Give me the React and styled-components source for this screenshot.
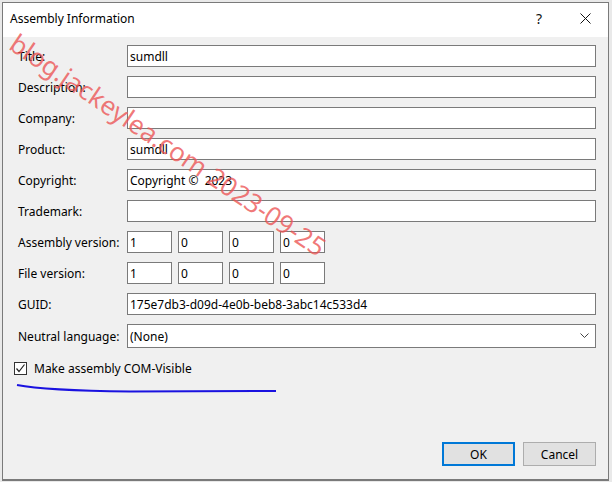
import React from 'react';
import styled, { createGlobalStyle } from 'styled-components';

const GlobalStyle = createGlobalStyle`
  html, body {
    margin: 0;
    padding: 0;
    background: #e9e9e9;
    font-family: "Noto Sans", "Liberation Sans", sans-serif;
  }
`;

// Styles
const Screen = styled.div`
  width: 612px;
  height: 482px;
  padding: 2px 0 0 2px;
  box-sizing: border-box;
  position: relative;
  overflow: hidden;
`;

const Dialog = styled.div`
  width: 607px;
  height: 479px;
  box-sizing: border-box;
  border: 1px solid #7a7a7a;
  border-bottom-width: 2px;
  background: #f0f0f0;
  display: flex;
  flex-direction: column;
`;

const TitleBar = styled.div`
  height: 34px;
  background: #ffffff;
  display: flex;
  align-items: center;
  padding: 0 0 0 7px;
  font-size: 12px;
  color: #000;
`;

const Caption = styled.div`
  flex: 1;
  padding-bottom: 4px;
`;

const TitleButton = styled.div`
  width: 46px;
  height: 34px;
  display: flex;
  align-items: center;
  justify-content: center;
  font-size: 14px;
  color: #111;
  padding-bottom: 3px;
  box-sizing: border-box;
`;

const Body = styled.div`
  flex: 1;
  display: flex;
  flex-direction: column;
  padding: 8px 12px 12px 15px;
`;

const Form = styled.div`
  display: grid;
  grid-template-columns: 109px 1fr;
  row-gap: 9px;
  align-items: center;
`;

const Label = styled.div`
  font-size: 12px;
  color: #000;
  white-space: nowrap;
`;

const Field = styled.div`
  height: ${(p) => (p.$tall ? 24 : 22)}px;
  width: ${(p) => (p.$w ? `${p.$w}px` : 'auto')};
  box-sizing: border-box;
  border: 1px solid #7a7a7a;
  background: #ffffff;
  display: flex;
  align-items: center;
  padding: 0 2px;
  font-size: 12px;
  color: #000;
  white-space: pre;
`;

const Versions = styled.div`
  display: flex;
  gap: 6px;
`;

const Chevron = styled.svg`
  margin-left: auto;
  margin-right: 4px;
`;

const CheckRow = styled.label`
  display: flex;
  align-items: center;
  gap: 7px;
  margin: 12px 0 0 -4px;
  font-size: 12px;
  color: #000;
`;

const Box = styled.div`
  width: 13px;
  height: 13px;
  box-sizing: border-box;
  border: 1px solid #333;
  background: #fff;
  display: flex;
  align-items: center;
  justify-content: center;
`;

const Footer = styled.div`
  margin-top: auto;
  display: flex;
  justify-content: flex-end;
  gap: 8px;
  padding-bottom: 1px;
`;

const Button = styled.button`
  width: 73px;
  height: 24px;
  box-sizing: border-box;
  background: #e1e1e1;
  border: ${(p) => (p.$default ? '2px solid #0078d7' : '1px solid #adadad')};
  font-family: inherit;
  font-size: 12px;
  color: #000;
  padding: 0;
`;

const Watermark = styled.div`
  position: absolute;
  left: 13px;
  top: 22px;
  transform-origin: 0 50%;
  transform: rotate(34deg);
  font-size: 26px;
  color: rgba(236, 84, 84, 0.78);
  white-space: nowrap;
  pointer-events: none;
`;

const Scribble = styled.svg`
  position: absolute;
  left: 0;
  top: 0;
  pointer-events: none;
`;

const rows = [
  ['Title:', 'sumdll'],
  ['Description:', ''],
  ['Company:', ''],
  ['Product:', 'sumdll'],
  ['Copyright:', 'Copyright ©  2023'],
  ['Trademark:', ''],
];

const VersionRow = ({ label, parts }) => (
  <>
    <Label>{label}</Label>
    <Versions>
      {parts.map((p, i) => (
        <Field key={i} $w={45}>{p}</Field>
      ))}
    </Versions>
  </>
);

const App = () => {
  return (
    <Screen>
      <GlobalStyle />
      <Dialog>
        <TitleBar>
          <Caption>Assembly Information</Caption>
          <TitleButton>?</TitleButton>
          <TitleButton>
            <svg width="11" height="11" viewBox="0 0 11 11">
              <path d="M0.5 0.5 L10.5 10.5 M10.5 0.5 L0.5 10.5" stroke="#111" strokeWidth="1" />
            </svg>
          </TitleButton>
        </TitleBar>
        <Body>
          <Form>
            {rows.map(([label, value]) => (
              <React.Fragment key={label}>
                <Label>{label}</Label>
                <Field>{value}</Field>
              </React.Fragment>
            ))}
            <VersionRow label="Assembly version:" parts={['1', '0', '0', '0']} />
            <VersionRow label="File version:" parts={['1', '0', '0', '0']} />
            <Label>GUID:</Label>
            <Field>175e7db3-d09d-4e0b-beb8-3abc14c533d4</Field>
            <Label>Neutral language:</Label>
            <Field $tall>
              (None)
              <Chevron width="9" height="6" viewBox="0 0 9 6">
                <polyline points="0.5,0.5 4.5,4.5 8.5,0.5" fill="none" stroke="#444" strokeWidth="1" />
              </Chevron>
            </Field>
          </Form>
          <CheckRow>
            <Box>
              <svg width="11" height="11" viewBox="0 0 11 11">
                <polyline points="1.5,5.5 4,8.5 9.5,1.5" fill="none" stroke="#222" strokeWidth="1.2" />
              </svg>
            </Box>
            Make assembly COM-Visible
          </CheckRow>
          <Footer>
            <Button $default>OK</Button>
            <Button>Cancel</Button>
          </Footer>
        </Body>
      </Dialog>
      <Watermark>blog.jackeylea.com 2023-09-25</Watermark>
      <Scribble width="612" height="482">
        <path d="M17 385 Q 45 390.5 130 391.5 L 276 391" fill="none" stroke="#1a12e0" strokeWidth="2" />
      </Scribble>
    </Screen>
  );
};

export default App;
